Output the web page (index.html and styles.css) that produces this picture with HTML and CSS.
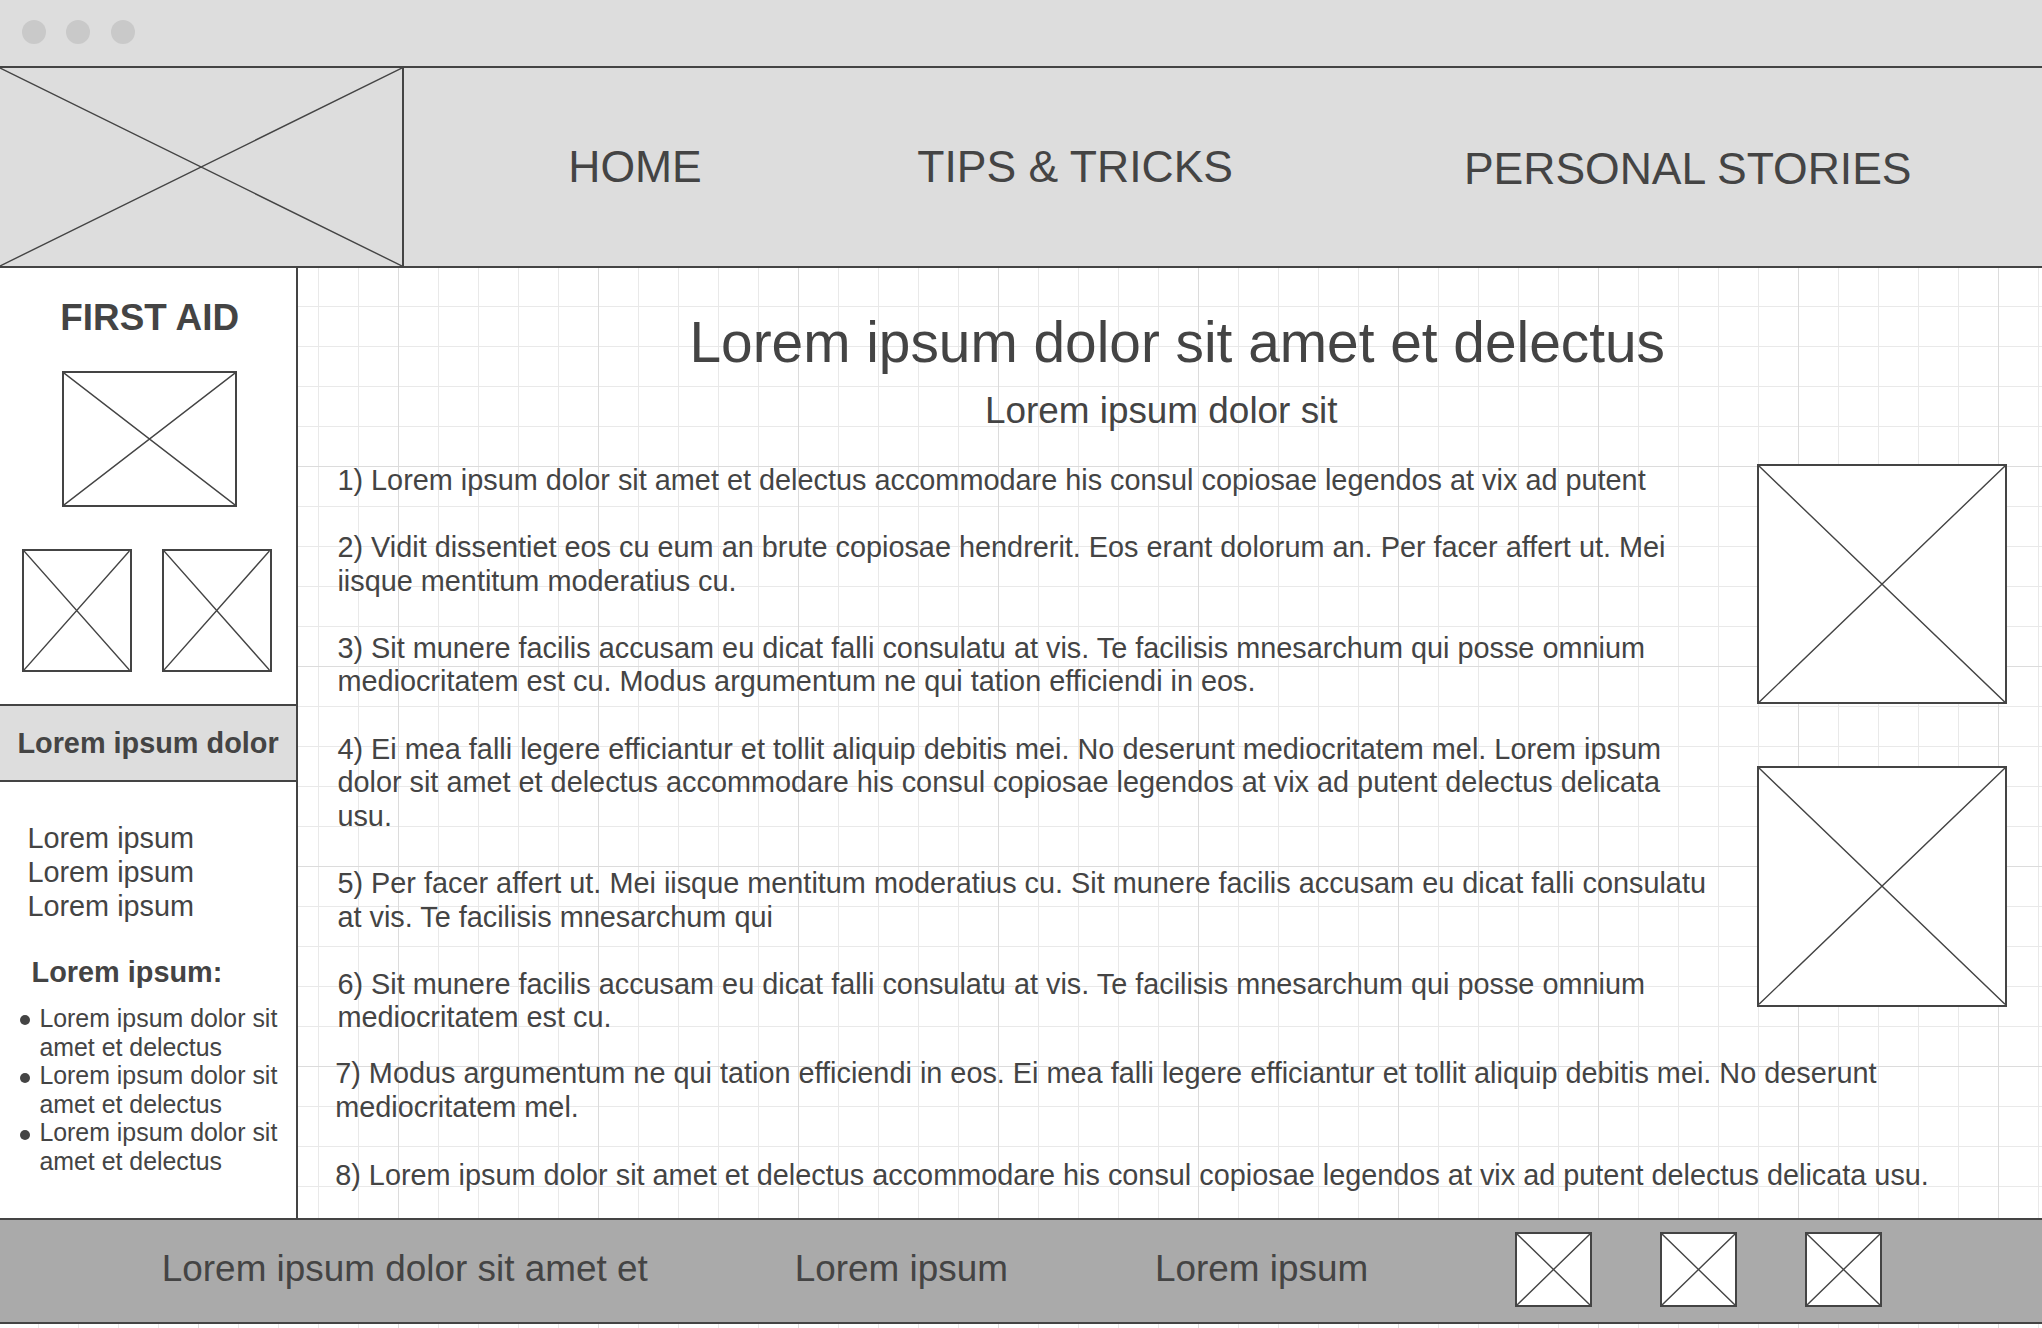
FILE: index.html
```html
<!DOCTYPE html>
<html lang="en">
<head>
<meta charset="utf-8">
<title>First Aid wireframe</title>
<link rel="stylesheet" href="styles.css">
</head>
<body>
<div class="window">
  <div class="titlebar">
    <span class="dot"></span><span class="dot"></span><span class="dot"></span>
  </div>

  <header class="header">
    <div class="logo">
      <svg class="x" viewBox="0 0 100 100" preserveAspectRatio="none"><path d="M0 0L100 100M100 0L0 100"/></svg>
    </div>
    <nav class="nav">
      <span class="nav-item">HOME</span>
      <span class="nav-item">TIPS &amp; TRICKS</span>
      <span class="nav-item nav-last">PERSONAL STORIES</span>
    </nav>
  </header>

  <div class="middle">
    <aside class="sidebar">
      <h3 class="fa-title">FIRST AID</h3>
      <div class="ph fa-main"><svg class="x" viewBox="0 0 100 100" preserveAspectRatio="none"><path d="M0 0L100 100M100 0L0 100"/></svg></div>
      <div class="fa-row">
        <div class="ph fa-small"><svg class="x" viewBox="0 0 100 100" preserveAspectRatio="none"><path d="M0 0L100 100M100 0L0 100"/></svg></div>
        <div class="ph fa-small"><svg class="x" viewBox="0 0 100 100" preserveAspectRatio="none"><path d="M0 0L100 100M100 0L0 100"/></svg></div>
      </div>
      <div class="band">Lorem ipsum dolor</div>
      <div class="links">Lorem ipsum<br>Lorem ipsum<br>Lorem ipsum</div>
      <div class="list-title">Lorem ipsum:</div>
      <ul class="bullets">
        <li><span>Lorem ipsum dolor sit amet et delectus</span></li>
        <li><span>Lorem ipsum dolor sit amet et delectus</span></li>
        <li><span>Lorem ipsum dolor sit amet et delectus</span></li>
      </ul>
    </aside>

    <main class="content">
      <h1 class="title">Lorem ipsum dolor sit amet et delectus</h1>
      <h2 class="subtitle">Lorem ipsum dolor sit</h2>
      <div class="article">
        <div class="items">
          <p>1) Lorem ipsum dolor sit amet et delectus accommodare his consul copiosae legendos at vix ad putent</p>
          <p>2) Vidit dissentiet eos cu eum an brute copiosae hendrerit. Eos erant dolorum an. Per facer affert ut. Mei iisque mentitum moderatius cu.</p>
          <p>3) Sit munere facilis accusam eu dicat falli consulatu at vis. Te facilisis mnesarchum qui posse omnium mediocritatem est cu. Modus argumentum ne qui tation efficiendi in eos.</p>
          <p>4) Ei mea falli legere efficiantur et tollit aliquip debitis mei. No deserunt mediocritatem mel. Lorem ipsum dolor sit amet et delectus accommodare his consul copiosae legendos at vix ad putent delectus delicata usu.</p>
          <p>5) Per facer affert ut. Mei iisque mentitum moderatius cu. Sit munere facilis accusam eu dicat falli consulatu at vis. Te facilisis mnesarchum qui</p>
          <p>6) Sit munere facilis accusam eu dicat falli consulatu at vis. Te facilisis mnesarchum qui posse omnium mediocritatem est cu.</p>
        </div>
        <div class="figures">
          <div class="ph fig"><svg class="x" viewBox="0 0 100 100" preserveAspectRatio="none"><path d="M0 0L100 100M100 0L0 100"/></svg></div>
          <div class="ph fig"><svg class="x" viewBox="0 0 100 100" preserveAspectRatio="none"><path d="M0 0L100 100M100 0L0 100"/></svg></div>
        </div>
      </div>
      <div class="items items-wide">
        <p>7) Modus argumentum ne qui tation efficiendi in eos. Ei mea falli legere efficiantur et tollit aliquip debitis mei. No deserunt mediocritatem mel.</p>
        <p>8) Lorem ipsum dolor sit amet et delectus accommodare his consul copiosae legendos at vix ad putent delectus delicata usu.</p>
      </div>
    </main>
  </div>

  <footer class="footer">
    <span class="ftext">Lorem ipsum dolor sit amet et</span>
    <span class="ftext">Lorem ipsum</span>
    <span class="ftext">Lorem ipsum</span>
    <div class="fboxes">
      <div class="ph fbox"><svg class="x" viewBox="0 0 100 100" preserveAspectRatio="none"><path d="M0 0L100 100M100 0L0 100"/></svg></div>
      <div class="ph fbox"><svg class="x" viewBox="0 0 100 100" preserveAspectRatio="none"><path d="M0 0L100 100M100 0L0 100"/></svg></div>
      <div class="ph fbox"><svg class="x" viewBox="0 0 100 100" preserveAspectRatio="none"><path d="M0 0L100 100M100 0L0 100"/></svg></div>
    </div>
  </footer>
</div>
</body>
</html>
```

FILE: styles.css
```css
html, body {
  margin: 0;
  padding: 0;
}

body {
  width: 2042px;
  height: 1328px;
  overflow: hidden;
  font-family: "Liberation Sans", Arial, sans-serif;
  color: #444444;
  background-color: #ffffff;
  background-image:
    linear-gradient(to right, #dcdcdc 1px, transparent 1px),
    linear-gradient(to bottom, #dcdcdc 1px, transparent 1px),
    linear-gradient(to right, #e9e9e9 1px, transparent 1px),
    linear-gradient(to bottom, #e9e9e9 1px, transparent 1px);
  background-size: 200px 200px, 200px 200px, 40px 40px, 40px 40px;
  background-position: 198px 0, 0 66px, 38px 0, 0 26px;
}

.window {
  width: 2042px;
  display: flex;
  flex-direction: column;
}

/* title bar */
.titlebar {
  height: 66px;
  box-sizing: border-box;
  background: #dddddd;
  display: flex;
  align-items: flex-start;
  gap: 20.5px;
  padding: 20px 0 0 21.5px;
}

.dot {
  width: 24px;
  height: 24px;
  border-radius: 50%;
  background: #c9c9c9;
}

/* placeholder cross */
.x {
  display: block;
  width: 100%;
  height: 100%;
}

.x path {
  fill: none;
  stroke: #444444;
  stroke-width: 1.4;
  vector-effect: non-scaling-stroke;
}

.ph {
  box-sizing: border-box;
  border: 2px solid #444444;
  background: #ffffff;
  flex: none;
}

/* header */
.header {
  height: 202px;
  box-sizing: border-box;
  border-top: 2px solid #444444;
  border-bottom: 2px solid #444444;
  background: #dddddd;
  display: flex;
}

.logo {
  width: 404px;
  box-sizing: border-box;
  border-right: 2px solid #444444;
  flex: none;
}

.nav {
  display: flex;
  align-items: center;
  padding-left: 164.3px;
  gap: 215.5px;
  font-size: 44.5px;
  white-space: nowrap;
}

.nav-last {
  margin-left: 15.4px;
  padding-top: 3px;
}

/* middle */
.middle {
  height: 950px;
  display: flex;
}

.sidebar {
  width: 298px;
  box-sizing: border-box;
  border-right: 2px solid #444444;
  background: #ffffff;
  display: flex;
  flex-direction: column;
  flex: none;
}

.fa-title {
  margin: 28.9px 0 0;
  padding-left: 3.4px;
  font-size: 36.85px;
  line-height: 42px;
  font-weight: 700;
  text-align: center;
}

.fa-main {
  width: 175px;
  height: 136px;
  margin: 32.1px 0 0 62.3px;
}

.fa-row {
  display: flex;
  gap: 30.6px;
  margin: 41.6px 0 0 22.3px;
}

.fa-small {
  width: 109.4px;
  height: 123px;
}

.band {
  margin-top: 32.4px;
  height: 78.4px;
  box-sizing: border-box;
  border-top: 2px solid #444444;
  border-bottom: 2px solid #444444;
  background: #dddddd;
  display: flex;
  align-items: center;
  justify-content: center;
  font-size: 28.85px;
  font-weight: 700;
}

.links {
  margin-top: 39.6px;
  padding-left: 27.4px;
  font-size: 28.85px;
  line-height: 33.9px;
}

.list-title {
  margin-top: 32.5px;
  padding-left: 31.6px;
  font-size: 28.85px;
  line-height: 33.8px;
  font-weight: 700;
}

.bullets {
  list-style: none;
  margin: 14.1px 0 0;
  padding: 0 0 0 20.2px;
  font-size: 24.9px;
  line-height: 28.6px;
}

.bullets li {
  display: flex;
}

.bullets li::before {
  content: "";
  flex: none;
  width: 10px;
  height: 10px;
  border-radius: 50%;
  background: #444444;
  margin: 11.4px 9.2px 0 0;
}

/* main content */
.content {
  flex: 1;
  padding-top: 41.5px;
}

.title {
  margin: 0;
  padding-left: 14.4px;
  font-size: 56.8px;
  line-height: 1.15;
  font-weight: 400;
  text-align: center;
}

.subtitle {
  margin: 15px 0 0;
  padding-right: 17.6px;
  font-size: 36.9px;
  line-height: 1.15;
  font-weight: 400;
  text-align: center;
}

.article {
  display: flex;
  margin-top: 31.6px;
  padding-left: 39.4px;
}

.items {
  width: 1376.6px;
  flex: none;
}

.items p {
  margin: 0 0 33.6px;
  font-size: 28.85px;
  line-height: 33.6px;
}

.items p:last-child {
  margin-bottom: 0;
}

.figures {
  margin-left: 43px;
  padding-top: 0.3px;
  display: flex;
  flex-direction: column;
  gap: 61.8px;
}

.fig {
  width: 250px;
  height: 240.3px;
}

.items-wide {
  width: 1672px;
  margin-top: 22.5px;
  padding-left: 37.2px;
}

.items-wide p {
  margin-bottom: 34px;
}

/* footer */
.footer {
  height: 106px;
  box-sizing: border-box;
  border-top: 2px solid #444444;
  border-bottom: 2px solid #444444;
  background: #aaaaaa;
  display: flex;
  align-items: center;
  gap: 147px;
  padding: 0 0 4px 161.8px;
  font-size: 36.9px;
  white-space: nowrap;
}

.fboxes {
  display: flex;
  gap: 68px;
}

.fbox {
  width: 77px;
  height: 75px;
}
```
